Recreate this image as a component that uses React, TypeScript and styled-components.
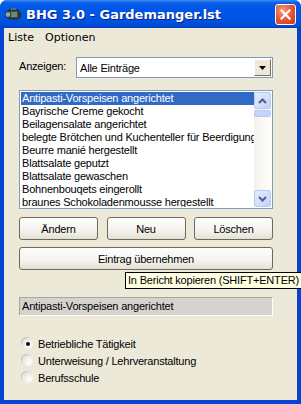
import React, { useState } from 'react';
import styled, { createGlobalStyle } from 'styled-components';

const GlobalStyle = createGlobalStyle`
  html, body { margin: 0; padding: 0; background: #ffffff; }
  body { font-family: "Liberation Sans", Arial, sans-serif; }
`;

const items = [
  'Antipasti-Vorspeisen angerichtet',
  'Bayrische Creme gekocht',
  'Beilagensalate angerichtet',
  'belegte Brötchen und Kuchenteller für Beerdigung',
  'Beurre manié hergestellt',
  'Blattsalate geputzt',
  'Blattsalate gewaschen',
  'Bohnenbouqets eingerollt',
  'braunes Schokoladenmousse hergestellt',
];

const radios = ['Betriebliche Tätigkeit', 'Unterweisung / Lehrveranstaltung', 'Berufsschule'];

const Frame = styled.div`
  width: 301px;
  height: 404px;
  box-sizing: border-box;
  display: flex;
  flex-direction: column;
  background: #0842d0;
  border-radius: 7px 7px 0 0;
  overflow: hidden;
  position: relative;
`;

const TitleBar = styled.div`
  height: 28px;
  flex: none;
  display: flex;
  align-items: center;
  padding: 0 5px 0 5px;
  background: linear-gradient(#3b8cf5 0%, #0a5ee6 10%, #0056e8 30%, #0054e3 70%, #0049d0 95%, #0036b8 100%);
  color: #fff;
`;

const TitleText = styled.span`
  font-family: "DejaVu Sans", Verdana, sans-serif;
  font-weight: bold;
  font-size: 13px;
  margin-left: 4px;
  text-shadow: 1px 1px 0 #0a1e8a;
  flex: 1;
`;

const CloseButton = styled.div`
  width: 21px;
  height: 21px;
  box-sizing: border-box;
  border: 1px solid #ffffff;
  border-radius: 3px;
  background: radial-gradient(circle at 35% 30%, #f29a7d 0%, #e2532f 55%, #c7391a 100%);
  display: flex;
  align-items: center;
  justify-content: center;
  margin-top: 1px;
`;

const Body = styled.div`
  flex: 1;
  margin: 0 4px 4px 4px;
  background: #ece9d8;
  display: flex;
  flex-direction: column;
  position: relative;
  font-size: 11px;
  letter-spacing: -0.2px;
  color: #000;
`;

const MenuBar = styled.div`
  height: 19px;
  display: flex;
  align-items: center;
  font-family: "DejaVu Sans", Tahoma, sans-serif;
  font-size: 11px;
  letter-spacing: 0;
  gap: 11px;
  padding-left: 4px;
`;

const Content = styled.div`
  padding: 10px 0 0 15px;
  width: 254px;
  display: flex;
  flex-direction: column;
`;

const Row = styled.div`
  display: flex;
  align-items: center;
  justify-content: space-between;
`;

const Label = styled.span`
  margin-top: -4px;
`;

const Combo = styled.div`
  width: 197px;
  height: 21px;
  box-sizing: border-box;
  border: 1px solid #7f9db9;
  background: #fff;
  display: flex;
  align-items: center;
  padding: 1px;
`;

const ComboText = styled.span`
  flex: 1;
  padding-left: 2px;
`;

const ComboArrow = styled.div`
  width: 17px;
  height: 17px;
  box-sizing: border-box;
  background: #ece9d8;
  border: 1px solid;
  border-color: #fff #716f64 #716f64 #fff;
  display: flex;
  align-items: center;
  justify-content: center;
`;

const ListBox = styled.div`
  margin-top: 12px;
  height: 119px;
  box-sizing: border-box;
  border: 1px solid #7f9db9;
  background: #fff;
  display: flex;
  padding: 1px;
`;

const ListItems = styled.div`
  flex: 1;
  overflow: hidden;
  white-space: nowrap;
`;

const ListItem = styled.div<{ selected?: boolean }>`
  height: 13px;
  line-height: 13px;
  padding-left: 1px;
  background: ${({ selected }) => (selected ? '#316ac5' : 'transparent')};
  color: ${({ selected }) => (selected ? '#fff' : '#000')};
`;

const ScrollBar = styled.div`
  width: 17px;
  display: flex;
  flex-direction: column;
  background: #fcfcfe;
`;

const ScrollButton = styled.div`
  height: 17px;
  box-sizing: border-box;
  border: 1px solid #b8c9f3;
  border-radius: 2px;
  background: linear-gradient(135deg, #e6eefc, #c0d2f9);
  display: flex;
  align-items: center;
  justify-content: center;
`;

const Track = styled.div`
  flex: 1;
  padding-top: 1px;
  background: linear-gradient(90deg, #f3f1ec, #fefefb);
`;

const Thumb = styled.div`
  height: 5px;
  border: 1px solid #b8c9f3;
  border-radius: 2px;
  background: #c4d4fa;
`;

const ButtonRow = styled.div`
  margin-top: 8px;
  display: flex;
  justify-content: space-between;
`;

const Button = styled.div<{ wide?: boolean }>`
  width: ${({ wide }) => (wide ? '254px' : '79px')};
  height: 23px;
  box-sizing: border-box;
  border: 1px solid #6c6a60;
  border-radius: 3px;
  background: linear-gradient(#fefefd 0%, #f4f3ee 60%, #e3e0d3 100%);
  display: flex;
  align-items: center;
  justify-content: center;
`;

const WideButton = styled(Button)`
  margin-top: 7px;
`;

const Tooltip = styled.div`
  position: absolute;
  left: 121px;
  top: 244px;
  height: 17px;
  box-sizing: border-box;
  padding: 0 2px;
  background: #ffffe1;
  border: 1px solid #000;
  line-height: 15px;
  white-space: nowrap;
`;

const ReadOnly = styled.div`
  margin-top: 27px;
  height: 19px;
  box-sizing: border-box;
  border: 1px solid;
  border-color: #a8a69a #fff #fff #a8a69a;
  background: #d6d3ce;
  padding-left: 2px;
  line-height: 17px;
`;

const RadioGroup = styled.div`
  margin-top: 19px;
  margin-left: 3px;
  display: flex;
  flex-direction: column;
`;

const RadioRow = styled.label`
  height: 17px;
  display: flex;
  align-items: center;
  gap: 5px;
`;

const RadioCircle = styled.span<{ checked?: boolean }>`
  width: 11px;
  height: 11px;
  border-radius: 50%;
  background: radial-gradient(circle at 70% 70%, #ffffff 0%, #eceae2 60%, #d8d5c8 100%);
  box-shadow: -1px -1px 0 #c9c6b8;
  display: flex;
  align-items: center;
  justify-content: center;
  &::after {
    content: '';
    width: 4px;
    height: 4px;
    border-radius: 50%;
    background: ${({ checked }) => (checked ? '#111' : 'transparent')};
  }
`;

function AppIcon() {
  return (
    <svg width="17" height="15" viewBox="0 0 17 15">
      <rect x="3" y="3" width="11" height="9" rx="2" fill="#3b4b45" stroke="#1b2420" />
      <rect x="5" y="5" width="7" height="5" fill="#6d8a7c" />
      <circle cx="3" cy="7.5" r="3" fill="#8aa9a0" stroke="#1c2a26" />
      <rect x="13" y="5" width="3" height="6" fill="#2a3530" />
      <rect x="6" y="1" width="5" height="2" fill="#5b6d66" />
    </svg>
  );
}

export default function App() {
  const [choice, setChoice] = useState(0);

  return (
    <>
      <GlobalStyle />
      <Frame>
        <TitleBar>
          <AppIcon />
          <TitleText>BHG 3.0 - Gardemanger.lst</TitleText>
          <CloseButton>
            <svg width="11" height="11" viewBox="0 0 11 11">
              <path d="M1.5 1.5 L9.5 9.5 M9.5 1.5 L1.5 9.5" stroke="#fff" strokeWidth="2.2" strokeLinecap="square" />
            </svg>
          </CloseButton>
        </TitleBar>
        <Body>
          <MenuBar>
            <span>Liste</span>
            <span>Optionen</span>
          </MenuBar>
          <Content>
            <Row>
              <Label>Anzeigen:</Label>
              <Combo>
                <ComboText>Alle Einträge</ComboText>
                <ComboArrow>
                  <svg width="7" height="4" viewBox="0 0 7 4">
                    <path d="M0 0 H7 L3.5 4 Z" fill="#000" />
                  </svg>
                </ComboArrow>
              </Combo>
            </Row>
            <ListBox>
              <ListItems>
                {items.map((item, i) => (
                  <ListItem key={item} selected={i === 0}>{item}</ListItem>
                ))}
              </ListItems>
              <ScrollBar>
                <ScrollButton>
                  <svg width="9" height="6" viewBox="0 0 9 6">
                    <path d="M1 5 L4.5 1.5 L8 5" stroke="#4d6185" strokeWidth="2" fill="none" />
                  </svg>
                </ScrollButton>
                <Track>
                  <Thumb />
                </Track>
                <ScrollButton>
                  <svg width="9" height="6" viewBox="0 0 9 6">
                    <path d="M1 1 L4.5 4.5 L8 1" stroke="#4d6185" strokeWidth="2" fill="none" />
                  </svg>
                </ScrollButton>
              </ScrollBar>
            </ListBox>
            <ButtonRow>
              <Button>Ändern</Button>
              <Button>Neu</Button>
              <Button>Löschen</Button>
            </ButtonRow>
            <WideButton wide>Eintrag übernehmen</WideButton>
            <ReadOnly>Antipasti-Vorspeisen angerichtet</ReadOnly>
            <RadioGroup>
              {radios.map((r, i) => (
                <RadioRow key={r} onClick={() => setChoice(i)}>
                  <RadioCircle checked={choice === i} />
                  {r}
                </RadioRow>
              ))}
            </RadioGroup>
          </Content>
          <Tooltip>In Bericht kopieren (SHIFT+ENTER)</Tooltip>
        </Body>
      </Frame>
    </>
  );
}
